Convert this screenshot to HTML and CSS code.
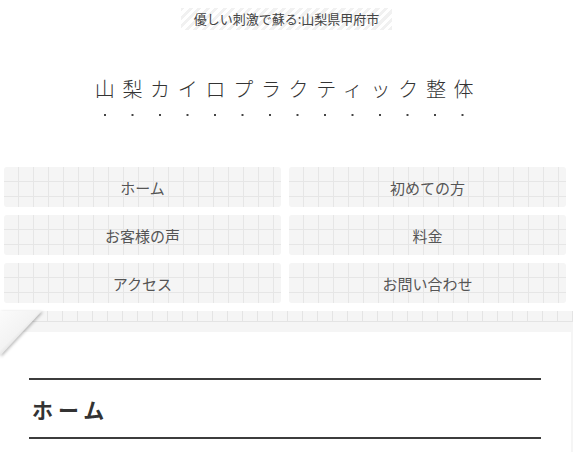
FILE: index.html
```html
<!DOCTYPE html>
<html lang="ja">
<head>
<meta charset="utf-8">
<title>山梨カイロプラクティック整体</title>
<link rel="stylesheet" href="styles.css">
</head>
<body>
<header class="site-header">
  <div class="tagline-wrap"><p class="tagline">優しい刺激で蘇る:山梨県甲府市</p></div>
  <div class="logo">
    <p class="logo-text">山梨カイロプラクティック整体</p>
    <div class="logo-dots"></div>
  </div>
  <nav class="gnav">
    <a class="gnav-item" href="#">ホーム</a>
    <a class="gnav-item" href="#">初めての方</a>
    <a class="gnav-item" href="#">お客様の声</a>
    <a class="gnav-item" href="#">料金</a>
    <a class="gnav-item" href="#">アクセス</a>
    <a class="gnav-item" href="#">お問い合わせ</a>
  </nav>
</header>
<div class="band"></div>
<main class="card">
  <div class="fold"></div>
  <h1 class="page-title">ホーム</h1>
</main>
</body>
</html>
```
FILE: styles.css
```css
html, body {
  margin: 0;
  padding: 0;
}
body {
  background: #f5f5f5;
  font-family: "Noto Sans CJK JP", "Noto Sans", sans-serif;
  color: #333;
  overflow: hidden;
}
.site-header {
  background: #fff;
  padding: 8px 0 8px;
}
.tagline-wrap {
  display: flex;
  justify-content: center;
}
.tagline {
  margin: 0;
  padding: 3px 13px;
  font-size: 13px;
  line-height: 16px;
  color: #444;
  background: repeating-linear-gradient(-45deg, #f1f1f1 0 3px, #fff 3px 6px);
}
.logo {
  margin-top: 44px;
  display: flex;
  flex-direction: column;
  align-items: center;
}
.logo-text {
  margin: 0;
  padding-left: 3px;
  font-size: 20px;
  line-height: 30px;
  font-weight: 300;
  letter-spacing: 7.7px;
  color: #333;
}
.logo-dots {
  margin-top: 9px;
  width: 388px;
  height: 4px;
  background-image: radial-gradient(circle, #444 1px, transparent 1.5px);
  background-size: 27.5px 4px;
  background-position: -1.75px 0;
}
.gnav {
  margin-top: 50px;
  padding-left: 4px;
  display: grid;
  grid-template-columns: 277px 277px;
  grid-auto-rows: 40px;
  gap: 8px;
}
.gnav-item {
  display: flex;
  align-items: center;
  justify-content: center;
  border-radius: 3px;
  background-color: #f5f5f5;
  background-image:
    linear-gradient(to right, transparent 14px, #e6e6e6 14px 15px),
    linear-gradient(to bottom, transparent 14px, #e6e6e6 14px 15px);
  background-size: 15px 15px;
  color: #555;
  font-size: 15px;
  text-decoration: none;
}
.band {
  height: 21px;
  background-color: #f5f5f5;
  background-image:
    linear-gradient(to right, transparent 2px, #e4e4e4 2px 3px, transparent 3px),
    linear-gradient(to bottom, transparent 10px, #e4e4e4 10px 11px, transparent 11px);
  background-size: 15px 11px, 100% 11px;
  background-repeat: repeat-x, no-repeat;
}
.card {
  position: relative;
  background: #fff;
  margin-right: 2px;
  padding: 46px 30px 60px 29px;
}
.fold {
  position: absolute;
  left: 0;
  top: -21px;
  width: 42px;
  height: 45px;
  filter: drop-shadow(1px 1px 1.5px rgba(0, 0, 0, 0.28));
}
.fold::before {
  content: "";
  position: absolute;
  inset: 0;
  clip-path: polygon(0 0, 100% 0, 0 100%);
  background: linear-gradient(135deg, #fbfbfb 0%, #f3f3f3 45%, #e9e9e9 50%);
}
.page-title {
  margin: 0;
  border-top: 2px solid #3c3c3c;
  border-bottom: 2px solid #3c3c3c;
  padding: 15px 3px 13px;
  font-size: 21px;
  line-height: 29px;
  font-weight: 700;
  letter-spacing: 5px;
  color: #333;
}
```
